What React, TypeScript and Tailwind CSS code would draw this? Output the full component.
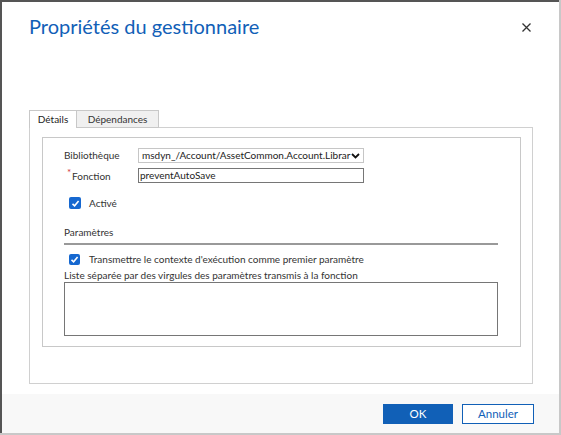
export default function App() {
  const font = { fontFamily: 'Lato, "Noto Sans", sans-serif' };

  return (
    <div className="w-[561px] h-[435px] bg-[#c8c8c8] overflow-hidden" style={font}>
      <div className="w-[559px] h-[433px] border-l-2 border-t-2 border-[#555555] bg-[#c8c8c8]">
        <div className="w-[557px] h-[431px] bg-white flex flex-col">
          {/* Header */}
          <div className="flex items-start justify-between pl-[27px] pr-[28px] pt-[8px]">
            <h1 className="text-[20px] leading-[32px] text-[#1160b7]">
              Propriétés du gestionnaire
            </h1>
            <button className="mt-[13px] w-[9px] h-[9px] flex items-center justify-center">
              <svg width="9" height="9" viewBox="0 0 9 9">
                <path d="M0.5 0.5 L8.5 8.5 M8.5 0.5 L0.5 8.5" stroke="#333" strokeWidth="1.3" />
              </svg>
            </button>
          </div>

          {/* Tabs */}
          <div className="mt-[68px] ml-[27px] w-[504px]">
            <div className="flex h-[18px] items-end">
              <div className="h-[18px] w-[48px] border-l border-t border-r border-[#c8c8c8] bg-white flex items-center justify-center text-[10px] text-[#222] relative z-10">
                Détails
              </div>
              <div className="h-[18px] w-[82px] border-t border-r border-b border-[#c8c8c8] bg-[#f0f0f0] flex items-center justify-center text-[10px] text-[#333]">
                Dépendances
              </div>
            </div>
            <div className="-mt-[1px] h-[257px] border border-[#d0d0d0] pt-[9px] pl-[12px] pr-[11px]">
              <div className="h-[210px] border border-[#c8c8c8] pl-[21px] pr-[21px] pt-[10px] text-[10px] text-[#333]">
                {/* Bibliothèque */}
                <div className="flex items-center h-[15px]">
                  <span className="w-[74px]">Bibliothèque</span>
                  <div className="w-[226px] h-[15px] border border-[#c6c6c6] flex items-center justify-between pl-[3px] pr-[3px] text-[#222]">
                    <span className="whitespace-nowrap">msdyn_/Account/AssetCommon.Account.Librar</span>
                    <svg width="9" height="6" viewBox="0 0 9 6" className="shrink-0">
                      <path d="M1 1 L4.5 4.5 L8 1" stroke="#111" strokeWidth="1.8" fill="none" />
                    </svg>
                  </div>
                </div>
                {/* Fonction */}
                <div className="flex items-center h-[15px] mt-[5px]">
                  <span className="w-[74px] relative">
                    <span className="text-[#d13438] absolute left-[3px] -top-[3px] text-[10px]">*</span>
                    <span className="ml-[8px] relative top-[1px]">Fonction</span>
                  </span>
                  <div className="w-[226px] h-[15px] border border-[#767676] flex items-center pl-[1px] text-[#222]">
                    preventAutoSave
                  </div>
                </div>
                {/* Activé */}
                <div className="flex items-center mt-[14px] h-[12px]">
                  <span className="ml-[5px] w-[12px] h-[12px] rounded-[2px] bg-[#1668d0] flex items-center justify-center">
                    <svg width="9" height="9" viewBox="0 0 9 9">
                      <path d="M1.5 4.8 L3.6 6.8 L7.6 2" stroke="white" strokeWidth="1.6" fill="none" />
                    </svg>
                  </span>
                  <span className="ml-[8px]">Activé</span>
                </div>

                {/* Paramètres */}
                <div className="mt-[16px] w-[434px]">
                  <div className="leading-[14px]">Paramètres</div>
                  <div className="mt-[4px] h-[2px] bg-[#999999]"></div>
                  <div className="flex items-center mt-[8px] h-[12px]">
                    <span className="ml-[5px] w-[11px] h-[11px] rounded-[2px] bg-[#1668d0] flex items-center justify-center">
                      <svg width="9" height="9" viewBox="0 0 9 9">
                        <path d="M1.5 4.8 L3.6 6.8 L7.6 2" stroke="white" strokeWidth="1.6" fill="none" />
                      </svg>
                    </span>
                    <span className="ml-[9px]">Transmettre le contexte d'exécution comme premier paramètre</span>
                  </div>
                  <div className="mt-[3px] leading-[14px]">Liste séparée par des virgules des paramètres transmis à la fonction</div>
                  <div className="mt-[0px] h-[54px] border border-[#767676]"></div>
                </div>
              </div>
            </div>
          </div>

          {/* Footer */}
          <div className="mt-auto h-[39px] bg-[#f8f8f8] flex items-center justify-end gap-[9px] pr-[25px] pt-[1px]">
            <button className="w-[70px] h-[20px] bg-[#1160b7] text-white text-[11.5px] flex items-center justify-center">
              OK
            </button>
            <button className="w-[72px] h-[20px] bg-white border border-[#1160b7] text-[#1160b7] text-[11.5px] flex items-center justify-center">
              Annuler
            </button>
          </div>
        </div>
      </div>
    </div>
  );
}
